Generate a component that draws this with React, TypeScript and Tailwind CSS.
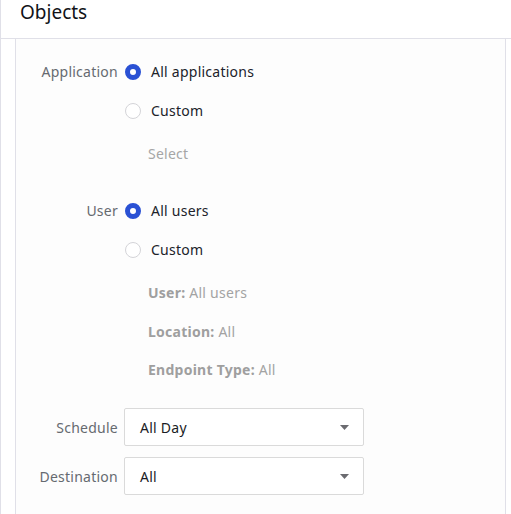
import React from "react";

const font = { fontFamily: '"Noto Sans", "Open Sans", Arial, sans-serif' };

function Radio({ checked }: { checked?: boolean }) {
  return checked ? (
    <span className="inline-block w-[16px] h-[16px] rounded-full border-[5px] border-[#2a51d4] bg-white shrink-0" />
  ) : (
    <span className="inline-block w-[16px] h-[16px] rounded-full border border-[#d4d4d8] bg-white shrink-0" />
  );
}

function Row({
  label,
  children,
  className = "h-[39px]",
}: {
  label?: string;
  children: React.ReactNode;
  className?: string;
}) {
  return (
    <div className={`flex items-center ${className}`}>
      <div className="w-[108px] pr-[6px] text-right text-[14px] tracking-[0.25px] text-[#666a70] shrink-0">
        {label ?? ""}
      </div>
      <div className="flex items-center">{children}</div>
    </div>
  );
}

function Option({ checked, text }: { checked?: boolean; text: string }) {
  return (
    <div className="flex items-center gap-[10px] pl-[1px]">
      <Radio checked={checked} />
      <span className="text-[14px] tracking-[0.25px] text-[#20222a]">{text}</span>
    </div>
  );
}

function Detail({ k, v }: { k: string; v: string }) {
  return (
    <span className="pl-[24px] text-[14px] tracking-[0.25px] text-[#a3a3a3]">
      <span className="font-bold text-[#9f9f9f]">{k}</span> {v}
    </span>
  );
}

function SelectBox({ value }: { value: string }) {
  return (
    <div className="w-[240px] h-[38px] border border-[#dadada] rounded-[2px] bg-white flex items-center justify-between pl-[15px] pr-[14px]">
      <span className="text-[14px] tracking-[0.25px] text-[#1a1c24]">{value}</span>
      <svg width="9" height="5" viewBox="0 0 9 5">
        <path d="M0 0 L9 0 L4.5 5 Z" fill="#6b6b70" />
      </svg>
    </div>
  );
}

export default function App() {
  return (
    <div
      className="w-[511px] h-[514px] overflow-hidden bg-white border-l border-[#e0e0e8] flex flex-col"
      style={font}
    >
      <div className="h-[39px] shrink-0 border-b border-[#e0e0e8] flex items-center pl-[19px] pb-[14px]">
        <span className="text-[19px] text-[#111318]">Objects</span>
      </div>
      <div className="flex-1 ml-[14px] mr-[5px] border-x border-[#e0e0e8] bg-[#fdfdfd] pt-[13px]">
        <Row label="Application">
          <Option checked text="All applications" />
        </Row>
        <Row>
          <Option text="Custom" />
        </Row>
        <Row className="h-[39px] mt-[4px]">
          <span className="pl-[24px] text-[14px] tracking-[0.25px] text-[#a6a6a6]">Select</span>
        </Row>
        <Row label="User" className="h-[39px] mt-[18px]">
          <Option checked text="All users" />
        </Row>
        <Row>
          <Option text="Custom" />
        </Row>
        <Row className="h-[39px] mt-[4px]">
          <Detail k="User:" v="All users" />
        </Row>
        <Row className="h-[38px]">
          <Detail k="Location:" v="All" />
        </Row>
        <Row>
          <Detail k="Endpoint Type:" v="All" />
        </Row>
        <Row label="Schedule" className="h-[38px] mt-[19px]">
          <SelectBox value="All Day" />
        </Row>
        <Row label="Destination" className="h-[38px] mt-[11px]">
          <SelectBox value="All" />
        </Row>
      </div>
    </div>
  );
}
